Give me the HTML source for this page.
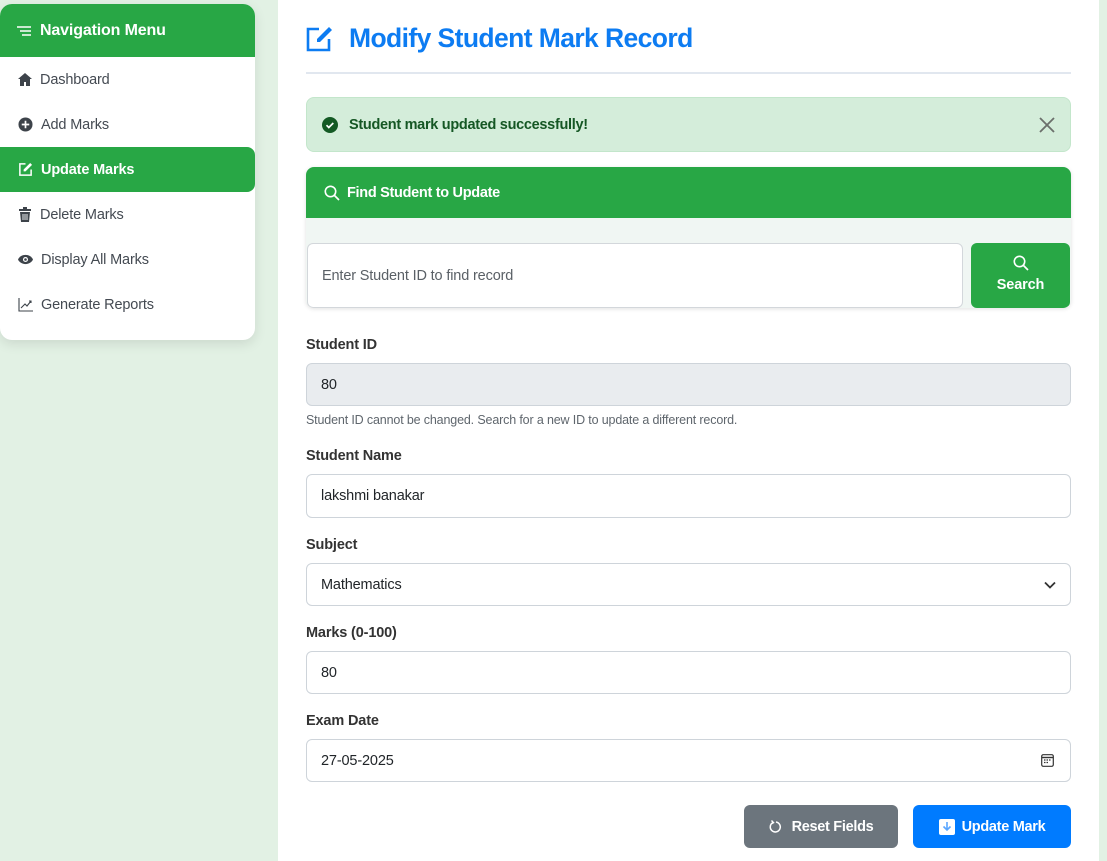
<!DOCTYPE html>
<html><head><meta charset="utf-8"><style>
*{box-sizing:border-box;margin:0;padding:0}
body{width:1107px;height:861px;overflow:hidden;background:#e2f1e4;font-family:"Liberation Sans",sans-serif;position:relative;color:#212529;letter-spacing:-0.15px}
.side{position:absolute;left:0;top:4px;width:255px;height:336px;background:#fff;border-radius:12px;box-shadow:0 4px 12px rgba(0,0,0,.1);overflow:hidden}
.sh{height:53px;background:#28a745;color:#fff;font-weight:bold;font-size:16px;display:flex;align-items:center;padding-left:16px}
.it{height:45px;display:flex;align-items:center;padding-left:18px;font-size:14.5px;color:#444a52}
.it svg{margin-right:8px}
.it.act{background:#28a745;color:#fff;font-weight:bold;border-radius:0 8px 8px 0;margin-right:0}
.main{position:absolute;left:278px;top:0;width:821px;height:861px;background:#fff}
.title{position:absolute;left:28px;top:23px;display:flex;align-items:center;color:#0d7cf2;font-weight:bold;font-size:26.5px;letter-spacing:-0.6px}
.hr{position:absolute;left:28px;top:72px;width:765px;height:2px;background:#e1e7ef}
.alert{position:absolute;left:28px;top:97px;width:765px;height:55px;background:#d4edda;border:1px solid #c3e6cb;border-radius:8px;display:flex;align-items:center;padding-left:15px;color:#155724;font-weight:bold;font-size:14.5px;letter-spacing:-0.3px}
.find{position:absolute;left:28px;top:167px;width:765px;height:141px;background:#f0f6f3;border-radius:8px;overflow:hidden;box-shadow:0 1px 4px rgba(0,0,0,.12)}
.fh{height:51px;background:#28a745;color:#fff;font-weight:bold;font-size:14.5px;display:flex;align-items:center;padding-left:18px;letter-spacing:-0.3px}
.fin{position:absolute;left:1px;top:76px;width:656px;height:65px;background:#fff;border:1px solid #d3d7db;border-radius:6px;padding-left:14px;display:flex;align-items:center;font-size:14.5px;color:#5a6066}
.fb{position:absolute;left:665px;top:76px;width:99px;height:65px;background:#28a745;border-radius:6px;color:#fff;font-weight:bold;font-size:14.5px;text-align:center;padding-top:12px}
.lab{position:absolute;left:28px;font-weight:bold;font-size:14.5px;color:#333}
.in{position:absolute;left:28px;width:765px;height:43px;border:1px solid #ced4da;border-radius:6px;padding-left:14px;display:flex;align-items:center;font-size:14.5px;color:#212529}
.help{position:absolute;left:28px;top:413px;font-size:12.5px;color:#5f666d}
.btn{position:absolute;top:805px;height:43px;border-radius:6px;color:#fff;font-weight:bold;font-size:14.5px;display:flex;align-items:center;justify-content:center;letter-spacing:-0.3px}
</style></head><body>
<div class="side">
<div class="sh"><svg width="18" height="14" viewBox="0 0 18 14" style="margin-right:6px"><path d="M1 3h14M4 7h11M6 11h9" stroke="#fff" stroke-width="1.6"/></svg>Navigation Menu</div>
<div class="it"><svg width="14" height="13" viewBox="0 0 14 13"><path d="M7 0L0 6h2v7h4V9h2v4h4V6h2z" fill="#3d434a"/></svg>Dashboard</div>
<div class="it"><svg width="15" height="15" viewBox="0 0 16 16"><circle cx="8" cy="8" r="7.5" fill="#3d434a"/><path d="M8 4v8M4 8h8" stroke="#fff" stroke-width="1.8"/></svg>Add Marks</div>
<div class="it act"><svg width="15" height="15" viewBox="0 0 16 16"><path d="M8 2H2v12h12V8" fill="none" stroke="#fff" stroke-width="1.6"/><path d="M13 1l2 2-7 7H6V8z" fill="#fff"/></svg>Update Marks</div>
<div class="it"><svg width="14" height="15" viewBox="0 0 14 15"><path d="M1 2h12v2H1zM5 0h4v2H5zM2 5h10l-1 10H3z" fill="#3d434a"/><path d="M5 7v6M7 7v6M9 7v6" stroke="#fff" stroke-width=".9"/></svg>Delete Marks</div>
<div class="it"><svg width="15" height="11" viewBox="0 0 16 11"><path d="M0 5.5C3-1 13-1 16 5.5 13 12 3 12 0 5.5z" fill="#3d434a"/><circle cx="8" cy="5.5" r="2.7" fill="#fff"/><circle cx="8" cy="5.5" r="1.4" fill="#3d434a"/></svg>Display All Marks</div>
<div class="it"><svg width="15" height="14" viewBox="0 0 15 14"><path d="M1 0v13h14" fill="none" stroke="#3d434a" stroke-width="1.1"/><path d="M3 10l4-4 2 2 4-5M11 3h2v2" fill="none" stroke="#3d434a" stroke-width="1.1"/></svg>Generate Reports</div>
</div>
<div class="main">
<div class="title"><svg width="27" height="26" viewBox="0 0 27 26" style="margin-right:16px"><path d="M13 3H2v21h21V13" fill="none" stroke="#0d7cf2" stroke-width="2.6"/><path d="M23 1l3 3-12 12H11v-3z" fill="#0d7cf2"/></svg>Modify Student Mark Record</div>
<div class="hr"></div>
<div class="alert"><svg width="16" height="16" viewBox="0 0 16 16" style="margin-right:11px"><circle cx="8" cy="8" r="8" fill="#145a24"/><path d="M4.5 8.2l2.3 2.3 4.5-4.5" fill="none" stroke="#fff" stroke-width="1.7"/></svg>Student mark updated successfully!<svg width="18" height="18" viewBox="0 0 18 18" style="position:absolute;right:14px;top:18px"><path d="M2 2l14 14M16 2L2 16" stroke="#6b6f6b" stroke-width="1.8"/></svg></div>
<div class="find"><div class="fh"><svg width="16" height="16" viewBox="0 0 16 16" style="margin-right:7px"><circle cx="6.5" cy="6.5" r="5.2" fill="none" stroke="#fff" stroke-width="1.6"/><path d="M10.5 10.5l4.5 4.5" stroke="#fff" stroke-width="1.7"/></svg>Find Student to Update</div>
<div class="fin">Enter Student ID to find record</div>
<div class="fb"><svg width="16" height="16" viewBox="0 0 16 16"><circle cx="6.5" cy="6.5" r="5.2" fill="none" stroke="#fff" stroke-width="1.6"/><path d="M10.5 10.5l4.5 4.5" stroke="#fff" stroke-width="1.7"/></svg><div style="margin-top:2px">Search</div></div></div>
<div class="lab" style="top:337px">Student ID</div>
<div class="in" style="top:363px;background:#e9ecef">80</div>
<div class="help">Student ID cannot be changed. Search for a new ID to update a different record.</div>
<div class="lab" style="top:448px">Student Name</div>
<div class="in" style="top:474px;height:44px">lakshmi banakar</div>
<div class="lab" style="top:537px">Subject</div>
<div class="in" style="top:563px">Mathematics<svg width="12" height="8" viewBox="0 0 12 8" style="position:absolute;right:14px;top:17px"><path d="M1 1.5l5 5 5-5" fill="none" stroke="#333" stroke-width="1.8"/></svg></div>
<div class="lab" style="top:625px">Marks (0-100)</div>
<div class="in" style="top:651px">80</div>
<div class="lab" style="top:713px">Exam Date</div>
<div class="in" style="top:739px">27-05-2025<svg width="13" height="13" viewBox="0 0 13 13" style="position:absolute;right:16px;top:14px"><rect x=".7" y=".7" width="11.6" height="11.6" rx="1.5" fill="none" stroke="#333" stroke-width="1.2"/><path d="M1 3.5h11" stroke="#333" stroke-width="1.4"/><path d="M3 6h1.5M5.5 6H7M8 6h1.5M3 8.5h1.5M5.5 8.5H7" stroke="#333" stroke-width="1.2"/></svg></div>
<div class="btn" style="left:466px;width:154px;background:#6c757d"><svg width="14" height="14" viewBox="0 0 14 14" style="margin-right:9px"><path d="M4 2.5A5 5 0 1 0 7 2" fill="none" stroke="#fff" stroke-width="1.5"/><path d="M2.5 0.5L4.5 2.7 2 4" fill="none" stroke="#fff" stroke-width="1.4"/></svg>Reset Fields</div>
<div class="btn" style="left:635px;width:158px;background:#007bff"><svg width="16" height="16" viewBox="0 0 16 16" style="margin-right:7px"><rect width="16" height="16" rx="2" fill="#fff"/><path d="M8 3v8M4.5 7.5L8 11l3.5-3.5" fill="none" stroke="#5aa6ff" stroke-width="1.6"/></svg>Update Mark</div>
</div>
</body></html>
